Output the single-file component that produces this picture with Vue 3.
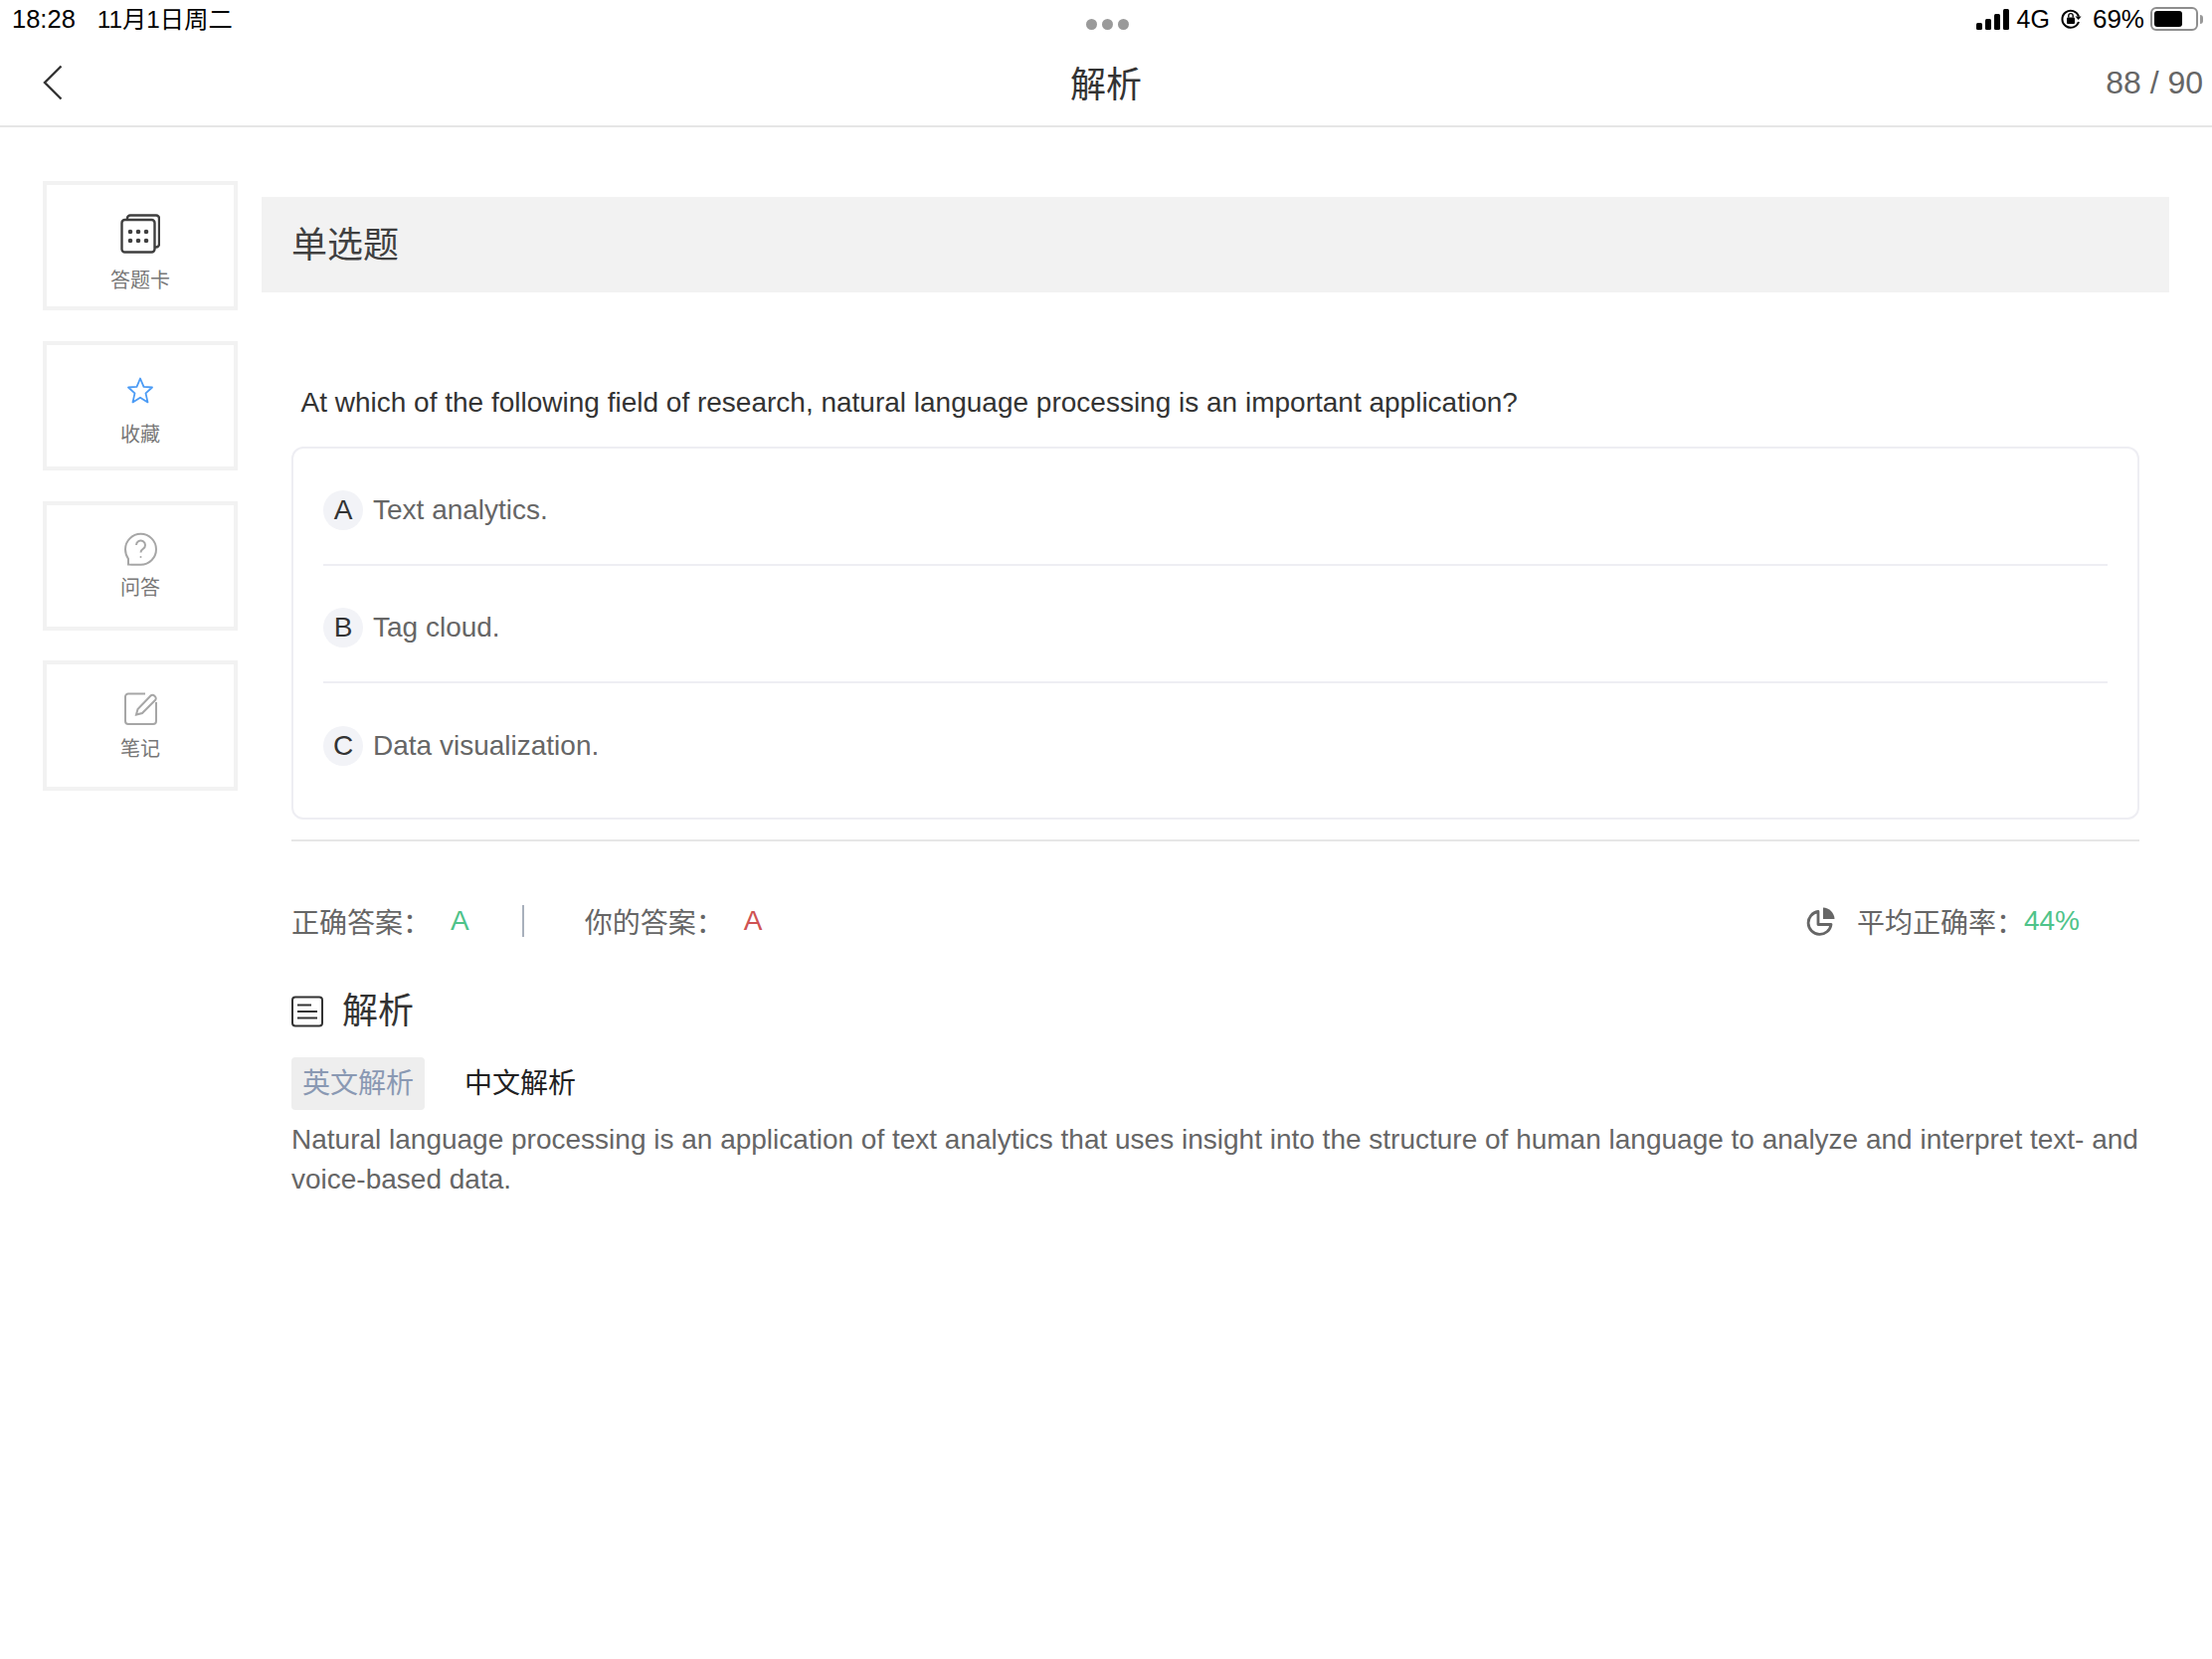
<template>
  <div class="page">
    <div class="status">
      <div class="status-left"><span class="time">18:28</span><span>11月1日周二</span></div>
      <div class="dots"><i></i><i></i><i></i></div>
      <div class="status-right">
        <svg width="34" height="21" viewBox="0 0 34 21"><rect x="0" y="14" width="6" height="7" rx="1.5"/><rect x="9" y="10" width="6" height="11" rx="1.5"/><rect x="18" y="5" width="6" height="16" rx="1.5"/><rect x="27" y="0" width="6" height="21" rx="1.5"/></svg>
        <span class="net">4G</span>
        <svg class="lock" width="22" height="22" viewBox="0 0 22 22" fill="none"><path d="M19 8.5A8.5 8.5 0 1 0 19 14" stroke="#000" stroke-width="2"/><path d="M21.5 8.5h-6l3.2 3.4z" fill="#000"/><rect x="7" y="9.5" width="8" height="6.5" rx="1" fill="#000"/><path d="M8.8 9.5V7.8a2.2 2.2 0 0 1 4.4 0v1.7" stroke="#000" stroke-width="1.4"/></svg>
        <span class="pct">69%</span>
        <div class="battery"><div class="battery-fill"></div></div>
        <div class="battery-tip"></div>
      </div>
    </div>
    <div class="nav">
      <svg class="back" width="20" height="36" viewBox="0 0 20 36" fill="none"><path d="M18.5 1.5 2 18l16.5 16.5" stroke="#333" stroke-width="2.4"/></svg>
      <div class="nav-title">解析</div>
      <div class="nav-count">88 / 90</div>
    </div>
    <div class="main">
      <div class="side">
        <div class="side-card" v-for="item in sideItems" :key="item.label">
          <svg v-if="item.icon === 'card'" class="ic-card" width="40" height="40" viewBox="0 0 40 40" fill="none" stroke="#3f3f3f" stroke-width="2.4"><path d="M7 5.5V4.5a3 3 0 0 1 3-3h26a3 3 0 0 1 3 3v26a3 3 0 0 1-3 3h-1"/><rect x="1.5" y="6" width="33" height="32.5" rx="3"/><g fill="#3f3f3f" stroke="none"><circle cx="10" cy="18" r="2.3"/><circle cx="18" cy="18" r="2.3"/><circle cx="26" cy="18" r="2.3"/><circle cx="10" cy="27" r="2.3"/><circle cx="18" cy="27" r="2.3"/><circle cx="26" cy="27" r="2.3"/></g></svg>
          <svg v-else-if="item.icon === 'star'" class="ic-star" width="26" height="28" viewBox="0 0 26 28" fill="none"><path d="M13 1.500l3.500 8.300 8.500.7-6.500 5.900 2 9-7.500-4.700-7.500 4.700 2-9L1 10.500l8.500-.7z" stroke="#4b9bf5" stroke-width="1.8" stroke-linejoin="round"/></svg>
          <svg v-else-if="item.icon === 'ask'" class="ic-ask" width="33" height="35" viewBox="0 0 33 35" fill="none" stroke="#a6a6a6" stroke-width="2"><path d="M4 32.500c4 .4 7.500.3 12.500.3a15.500 15.500 0 1 0-15.500-15.500c0 4 1.200 7 3 9.500z"/><path d="M12 13a4.500 4.500 0 1 1 6.800 3.900c-1.600 1-2.300 2-2.300 3.600"/><circle cx="16.500" cy="25" r="1" fill="#a6a6a6" stroke="none"/></svg>
          <svg v-else class="ic-note" width="33" height="33" viewBox="0 0 33 33" fill="none" stroke="#a6a6a6" stroke-width="2"><path d="M21 1.500H4a3 3 0 0 0-3 3v24.500a3 3 0 0 0 3 3h25a3 3 0 0 0 3-3V10"/><path d="M12 22.500l1.500-5.500L26.500 3.500a2.500 2.500 0 0 1 3.600 0l.9.9a2.500 2.500 0 0 1 0 3.600L18 21z"/></svg>
          <div class="side-label">{{ item.label }}</div>
        </div>
      </div>
      <div class="content">
        <div class="type-bar">单选题</div>
        <div class="body">
          <div class="question">At which of the following field of research, natural language processing is an important application?</div>
          <div class="options">
            <div class="option" v-for="opt in options" :key="opt.key">
              <span class="opt-key">{{ opt.key }}</span>
              <span class="opt-text">{{ opt.text }}</span>
            </div>
          </div>
          <div class="rule"></div>
          <div class="answers">
            <span class="ans-label">正确答案：</span>
            <span class="ans-right">A</span>
            <span class="ans-sep"></span>
            <span class="ans-label">你的答案：</span>
            <span class="ans-mine">A</span>
            <div class="rate">
              <svg width="30" height="30" viewBox="0 0 30 30" fill="none"><path d="M12 5.500a11.500 11.500 0 1 0 13 13H12z" stroke="#666" stroke-width="2.8" stroke-linejoin="round"/><path d="M17 1.500a12 12 0 0 1 11.500 11.500H17z" fill="#666"/></svg>
              <span class="rate-label">平均正确率：</span>
              <span class="rate-val">44%</span>
            </div>
          </div>
          <div class="ana-title">
            <svg width="32" height="32" viewBox="0 0 32 32" fill="none" stroke="#333" stroke-width="2"><rect x="1" y="1.500" width="30" height="29" rx="3"/><path d="M6 9.500h14M6 16h20M6 22.500h20"/></svg>
            <span>解析</span>
          </div>
          <div class="tabs">
            <span class="tab active">英文解析</span>
            <span class="tab">中文解析</span>
          </div>
          <p class="ana-text">Natural language processing is an application of text analytics that uses insight into the structure of human language to analyze and interpret text- and voice-based data.</p>
        </div>
      </div>
    </div>
  </div>
</template>

<script setup>
const sideItems = [
  { icon: 'card', label: '答题卡' },
  { icon: 'star', label: '收藏' },
  { icon: 'ask', label: '问答' },
  { icon: 'note', label: '笔记' }
]

const options = [
  { key: 'A', text: 'Text analytics.' },
  { key: 'B', text: 'Tag cloud.' },
  { key: 'C', text: 'Data visualization.' }
]
</script>

<style>
html, body {
  margin: 0;
  background: #fff;
}
</style>

<style scoped>
.page {
  width: 2224px;
  height: 1668px;
  font-family: "Liberation Sans", "Noto Sans CJK SC", sans-serif;
  background: #fff;
  overflow: hidden;
}

.status {
  height: 38px;
  padding: 0 9px 0 12px;
  display: flex;
  align-items: center;
  justify-content: space-between;
  font-size: 25px;
  line-height: 30px;
  color: #000;
}

.status-left {
  display: flex;
  align-items: baseline;
  gap: 22px;
  width: 500px;
  font-size: 24.3px;
}

.time {
  font-size: 25.5px;
}

.dots {
  display: flex;
  gap: 5px;
  margin-top: 10px;
}

.dots i {
  width: 11px;
  height: 11px;
  border-radius: 50%;
  background: #9a9a9a;
}

.status-right {
  width: 500px;
  display: flex;
  align-items: center;
  justify-content: flex-end;
}

.net {
  margin-left: 7px;
}

.lock {
  margin-left: 10px;
}

.pct {
  margin-left: 11px;
  font-size: 26px;
}

.battery {
  width: 40px;
  height: 16px;
  margin-left: 6px;
  border: 2px solid #8e8e8e;
  border-radius: 6px;
  padding: 2px;
  box-sizing: content-box;
}

.battery-fill {
  width: 28px;
  height: 16px;
  background: #000;
  border-radius: 3px;
}

.battery-tip {
  width: 3px;
  height: 9px;
  margin-left: 2px;
  background: #999;
  border-radius: 0 3px 3px 0;
}

.nav {
  height: 88px;
  border-bottom: 2px solid #e6e6e6;
  display: flex;
  align-items: center;
  justify-content: space-between;
  padding: 0 9px 0 43px;
  position: relative;
}

.back {
  margin-top: 1px;
}

.nav-title {
  position: absolute;
  left: 0;
  right: 0;
  text-align: center;
  font-size: 36px;
  color: #333;
  pointer-events: none;
}

.nav-count {
  font-size: 32px;
  color: #666;
  margin-top: 2px;
}

.main {
  display: flex;
  padding-left: 43px;
  padding-top: 54px;
}

.side {
  width: 196px;
  display: flex;
  flex-direction: column;
  gap: 31px;
}

.side-card {
  height: 130px;
  box-sizing: border-box;
  border: 4px solid #f2f2f2;
  display: flex;
  flex-direction: column;
  align-items: center;
}

.side-card:last-child {
  height: 131px;
  margin-top: -1px;
}

.ic-card {
  margin-top: 29px;
  margin-bottom: 7px;
}

.ic-star {
  margin-top: 32px;
  margin-bottom: 10px;
}

.ic-ask {
  margin-top: 27px;
  margin-bottom: 1px;
}

.ic-note {
  margin-top: 28px;
  margin-bottom: 4px;
}

.side-label {
  font-size: 20px;
  line-height: 24px;
  color: #777;
  margin-top: 8px;
}

.content {
  width: 1918px;
  margin-left: 24px;
  padding-top: 16px;
}

.type-bar {
  height: 96px;
  line-height: 98px;
  background: #f2f2f2;
  padding-left: 30px;
  font-size: 36px;
  color: #404040;
}

.body {
  margin-left: 30px;
  width: 1858px;
}

.question {
  margin-top: 91px;
  padding-left: 9.5px;
  font-size: 28px;
  line-height: 40px;
  color: #333;
}

.options {
  margin-top: 24px;
  box-sizing: border-box;
  height: 375px;
  border: 2px solid #eeeef3;
  border-radius: 12px;
  padding: 0 30px;
}

.option {
  height: 118px;
  box-sizing: border-box;
  padding-top: 8px;
  display: flex;
  align-items: center;
  border-bottom: 2px solid #eeeef3;
}

.option:last-child {
  border-bottom: none;
}

.opt-key {
  width: 40px;
  height: 40px;
  border-radius: 50%;
  background: #f2f3f7;
  color: #333;
  font-size: 28px;
  line-height: 40px;
  text-align: center;
  flex-shrink: 0;
}

.opt-text {
  margin-left: 10px;
  font-size: 28px;
  color: #666;
}

.rule {
  height: 2px;
  margin-top: 20px;
  background: #e6e6e6;
}

.answers {
  margin-top: 60px;
  height: 40px;
  display: flex;
  align-items: center;
  font-size: 28px;
}

.ans-label {
  color: #666;
}

.ans-right {
  color: #4fc38a;
  margin-left: 20px;
}

.ans-sep {
  width: 2px;
  height: 32px;
  background: #a8b0bc;
  margin: 0 61px 0 53px;
}

.ans-mine {
  color: #cf5353;
  margin-left: 20px;
}

.rate {
  margin-left: auto;
  margin-right: 60px;
  display: flex;
  align-items: center;
  color: #666;
}

.rate-label {
  margin-left: 21px;
}

.rate-val {
  color: #4fc38a;
}

.ana-title {
  margin-top: 49px;
  display: flex;
  align-items: center;
  font-size: 36px;
  line-height: 44px;
  color: #333;
}

.ana-title span {
  margin-left: 19px;
}

.tabs {
  margin-top: 24px;
  display: flex;
  align-items: center;
  gap: 40px;
}

.tab {
  height: 53px;
  line-height: 53px;
  font-size: 28px;
  color: #222;
}

.tab.active {
  padding: 0 11px;
  border-radius: 4px;
  background: #eeeeee;
  color: #8a99b3;
}

.ana-text {
  margin: 10px 0 0;
  font-size: 28px;
  line-height: 40px;
  color: #666;
}
</style>
